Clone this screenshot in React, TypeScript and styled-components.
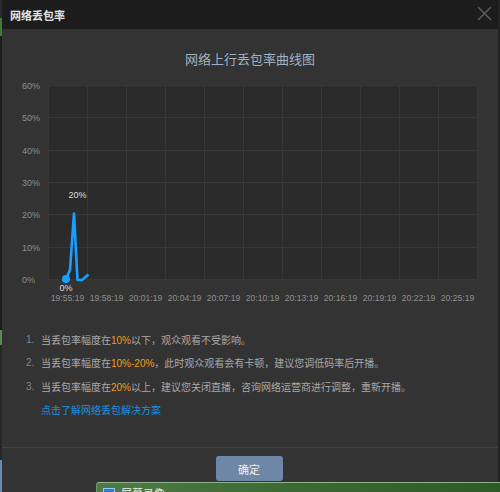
import React from 'react';
import styled, { createGlobalStyle } from 'styled-components';

const GlobalStyle = createGlobalStyle`
  html, body {
    margin: 0;
    padding: 0;
    background: #1f1f1f;
    overflow: hidden;
  }
  body {
    font-family: 'Liberation Sans', 'Noto Sans CJK SC', sans-serif;
  }
`;

const yTicks = ['60%', '50%', '40%', '30%', '20%', '10%', '0%'];
const xTicks = [
  '19:55:19',
  '19:58:19',
  '20:01:19',
  '20:04:19',
  '20:07:19',
  '20:10:19',
  '20:13:19',
  '20:16:19',
  '20:19:19',
  '20:22:19',
  '20:25:19',
];

const PLOT_LEFT = 48;
const PLOT_RIGHT = 477;
const PLOT_TOP = 85;
const PLOT_BOTTOM = 279;
const COL = (PLOT_RIGHT - PLOT_LEFT) / 11;
const ROW = (PLOT_BOTTOM - PLOT_TOP) / 6;

export default function App() {
  return (
    <>
      <GlobalStyle />
      <Desktop>
        <EdgeStrip />
        <Dialog>
          <TitleBar>
            <DialogTitle>网络丢包率</DialogTitle>
            <CloseButton aria-label="close">
              <svg width="15" height="15" viewBox="0 0 15 15">
                <path d="M1 1 L14 14 M14 1 L1 14" stroke="#5b5b5b" strokeWidth="1.6" />
              </svg>
            </CloseButton>
          </TitleBar>
          <Body>
            <ChartTitle>网络上行丢包率曲线图</ChartTitle>
            <Chart viewBox="2 67 496 240" width="496" height="240">
              <rect
                x={PLOT_LEFT}
                y={PLOT_TOP}
                width={PLOT_RIGHT - PLOT_LEFT}
                height={PLOT_BOTTOM - PLOT_TOP}
                fill="#2b2b2b"
              />
              {yTicks.map((t, i) => {
                const y = Math.round(PLOT_TOP + i * ROW) + 0.5;
                return (
                  <g key={t}>
                    <line x1={PLOT_LEFT} x2={PLOT_RIGHT} y1={y} y2={y} stroke="#383838" />
                    <text x={22} y={y + 3} fontSize="9" fill="#8e8e8e">
                      {t}
                    </text>
                  </g>
                );
              })}
              {Array.from({ length: 12 }).map((_, i) => {
                const x = Math.round(PLOT_LEFT + i * COL) + 0.5;
                return <line key={i} x1={x} x2={x} y1={PLOT_TOP} y2={PLOT_BOTTOM} stroke="#383838" />;
              })}
              {xTicks.map((t, i) => (
                <text
                  key={t}
                  x={PLOT_LEFT + COL / 2 + i * COL}
                  y={300.5}
                  fontSize="8.6"
                  fill="#8e8e8e"
                  textAnchor="middle"
                >
                  {t}
                </text>
              ))}
              <polyline
                points="66,279 70,270 74,213.5 77.5,280 82,280 88.5,274.5"
                fill="none"
                stroke="#16a0ff"
                strokeWidth="2.6"
                strokeLinejoin="round"
              />
              <circle cx="66" cy="279" r="4" fill="#16a0ff" />
              <LabelText x="77.5" y="198" textAnchor="middle">
                20%
              </LabelText>
              <LabelText x="66" y="291" textAnchor="middle">
                0%
              </LabelText>
            </Chart>
            <Notes>
              <Note>
                <Num>1.</Num>
                <span>
                  当丢包率幅度在<Hl>10%</Hl>以下，观众观看不受影响。
                </span>
              </Note>
              <Note>
                <Num>2.</Num>
                <span>
                  当丢包率幅度在<Hl>10%-20%</Hl>，此时观众观看会有卡顿，建议您调低码率后开播。
                </span>
              </Note>
              <Note>
                <Num>3.</Num>
                <span>
                  当丢包率幅度在<Hl>20%</Hl>以上，建议您关闭直播，咨询网络运营商进行调整，重新开播。
                </span>
              </Note>
              <Note>
                <Num />
                <Link href="#">点击了解网络丢包解决方案</Link>
              </Note>
            </Notes>
          </Body>
          <Footer>
            <ConfirmButton>确定</ConfirmButton>
          </Footer>
        </Dialog>
        <BackWindow>
          <BackIcon />
          <BackTitle>屏幕录像</BackTitle>
        </BackWindow>
      </Desktop>
    </>
  );
}

const Desktop = styled.div`
  position: relative;
  width: 500px;
  height: 492px;
  display: flex;
  flex-direction: row;
  overflow: hidden;
  background: #222;
`;

const EdgeStrip = styled.div`
  width: 2px;
  flex-shrink: 0;
  background: linear-gradient(
    #2a2a2a 0,
    #2a2a2a 18px,
    #3f7a36 18px,
    #3f7a36 36px,
    #1c1c1c 36px,
    #1c1c1c 330px,
    #5c8c4c 330px,
    #5c8c4c 345px,
    #262626 345px,
    #262626 460px,
    #6a8ab8 460px
  );
`;

const Dialog = styled.div`
  width: 496px;
  height: 492px;
  display: flex;
  flex-direction: column;
  background: #333333;
`;

const TitleBar = styled.div`
  height: 29px;
  flex-shrink: 0;
  display: flex;
  align-items: center;
  justify-content: space-between;
  padding: 0 6px 0 8px;
  background: #1c1c1c;
`;

const DialogTitle = styled.div`
  color: #e2e2e2;
  font-size: 11px;
  font-weight: 700;
  font-family: 'Noto Sans CJK SC', sans-serif;
  padding-top: 1px;
`;

const CloseButton = styled.div`
  display: flex;
  align-items: center;
  margin-top: -3px;
`;

const Body = styled.div`
  display: flex;
  flex-direction: column;
`;

const ChartTitle = styled.div`
  margin-top: 22px;
  height: 16px;
  line-height: 16px;
  text-align: center;
  color: #9fb1c5;
  font-size: 13px;
  font-family: 'Noto Sans CJK SC', sans-serif;
`;

const Chart = styled.svg`
  display: block;
  font-family: 'Liberation Sans', sans-serif;
`;

const LabelText = styled.text`
  font-size: 9px;
  fill: #dcdcdc;
`;

const Notes = styled.div`
  margin-top: 21px;
  display: flex;
  flex-direction: column;
`;

const Note = styled.div`
  display: flex;
  flex-direction: row;
  height: 23.33px;
  line-height: 23.33px;
  font-size: 10px;
  color: #a9a9a9;
  font-family: 'Noto Sans CJK SC', sans-serif;
  white-space: nowrap;
`;

const Num = styled.span`
  width: 15px;
  margin-left: 24px;
  color: #858585;
  font-family: 'Liberation Sans', sans-serif;
`;

const Hl = styled.span`
  color: #f29b1d;
  font-family: 'Liberation Sans', sans-serif;
`;

const Link = styled.a`
  color: #1b8fe3;
  text-decoration: none;
`;

const Footer = styled.div`
  margin-top: 26px;
  border-top: 1px solid #434343;
  padding-top: 8px;
  display: flex;
  justify-content: center;
`;

const ConfirmButton = styled.button`
  width: 67px;
  height: 25px;
  margin-left: -2px;
  border: none;
  border-radius: 3px;
  background: #6f87a7;
  color: #f0f0f0;
  font-size: 11px;
  font-family: 'Noto Sans CJK SC', sans-serif;
  padding: 0;
`;

const BackWindow = styled.div`
  position: absolute;
  left: 96px;
  top: 482px;
  width: 410px;
  height: 30px;
  border-top: 1px solid #8fb48a;
  border-left: 1px solid #6f9a68;
  border-radius: 3px 0 0 0;
  background: linear-gradient(90deg, #4f7a47 0%, #3b6a32 45%, #2d5a24 100%);
  display: flex;
  flex-direction: row;
  align-items: flex-start;
  gap: 6px;
  padding: 5px 0 0 6px;
`;

const BackIcon = styled.div`
  width: 10px;
  height: 10px;
  background: #2a7fd6;
  border: 1px solid #9cc6f0;
`;

const BackTitle = styled.div`
  color: #e8efe6;
  font-size: 11px;
  line-height: 11px;
  font-family: 'Noto Sans CJK SC', sans-serif;
`;
